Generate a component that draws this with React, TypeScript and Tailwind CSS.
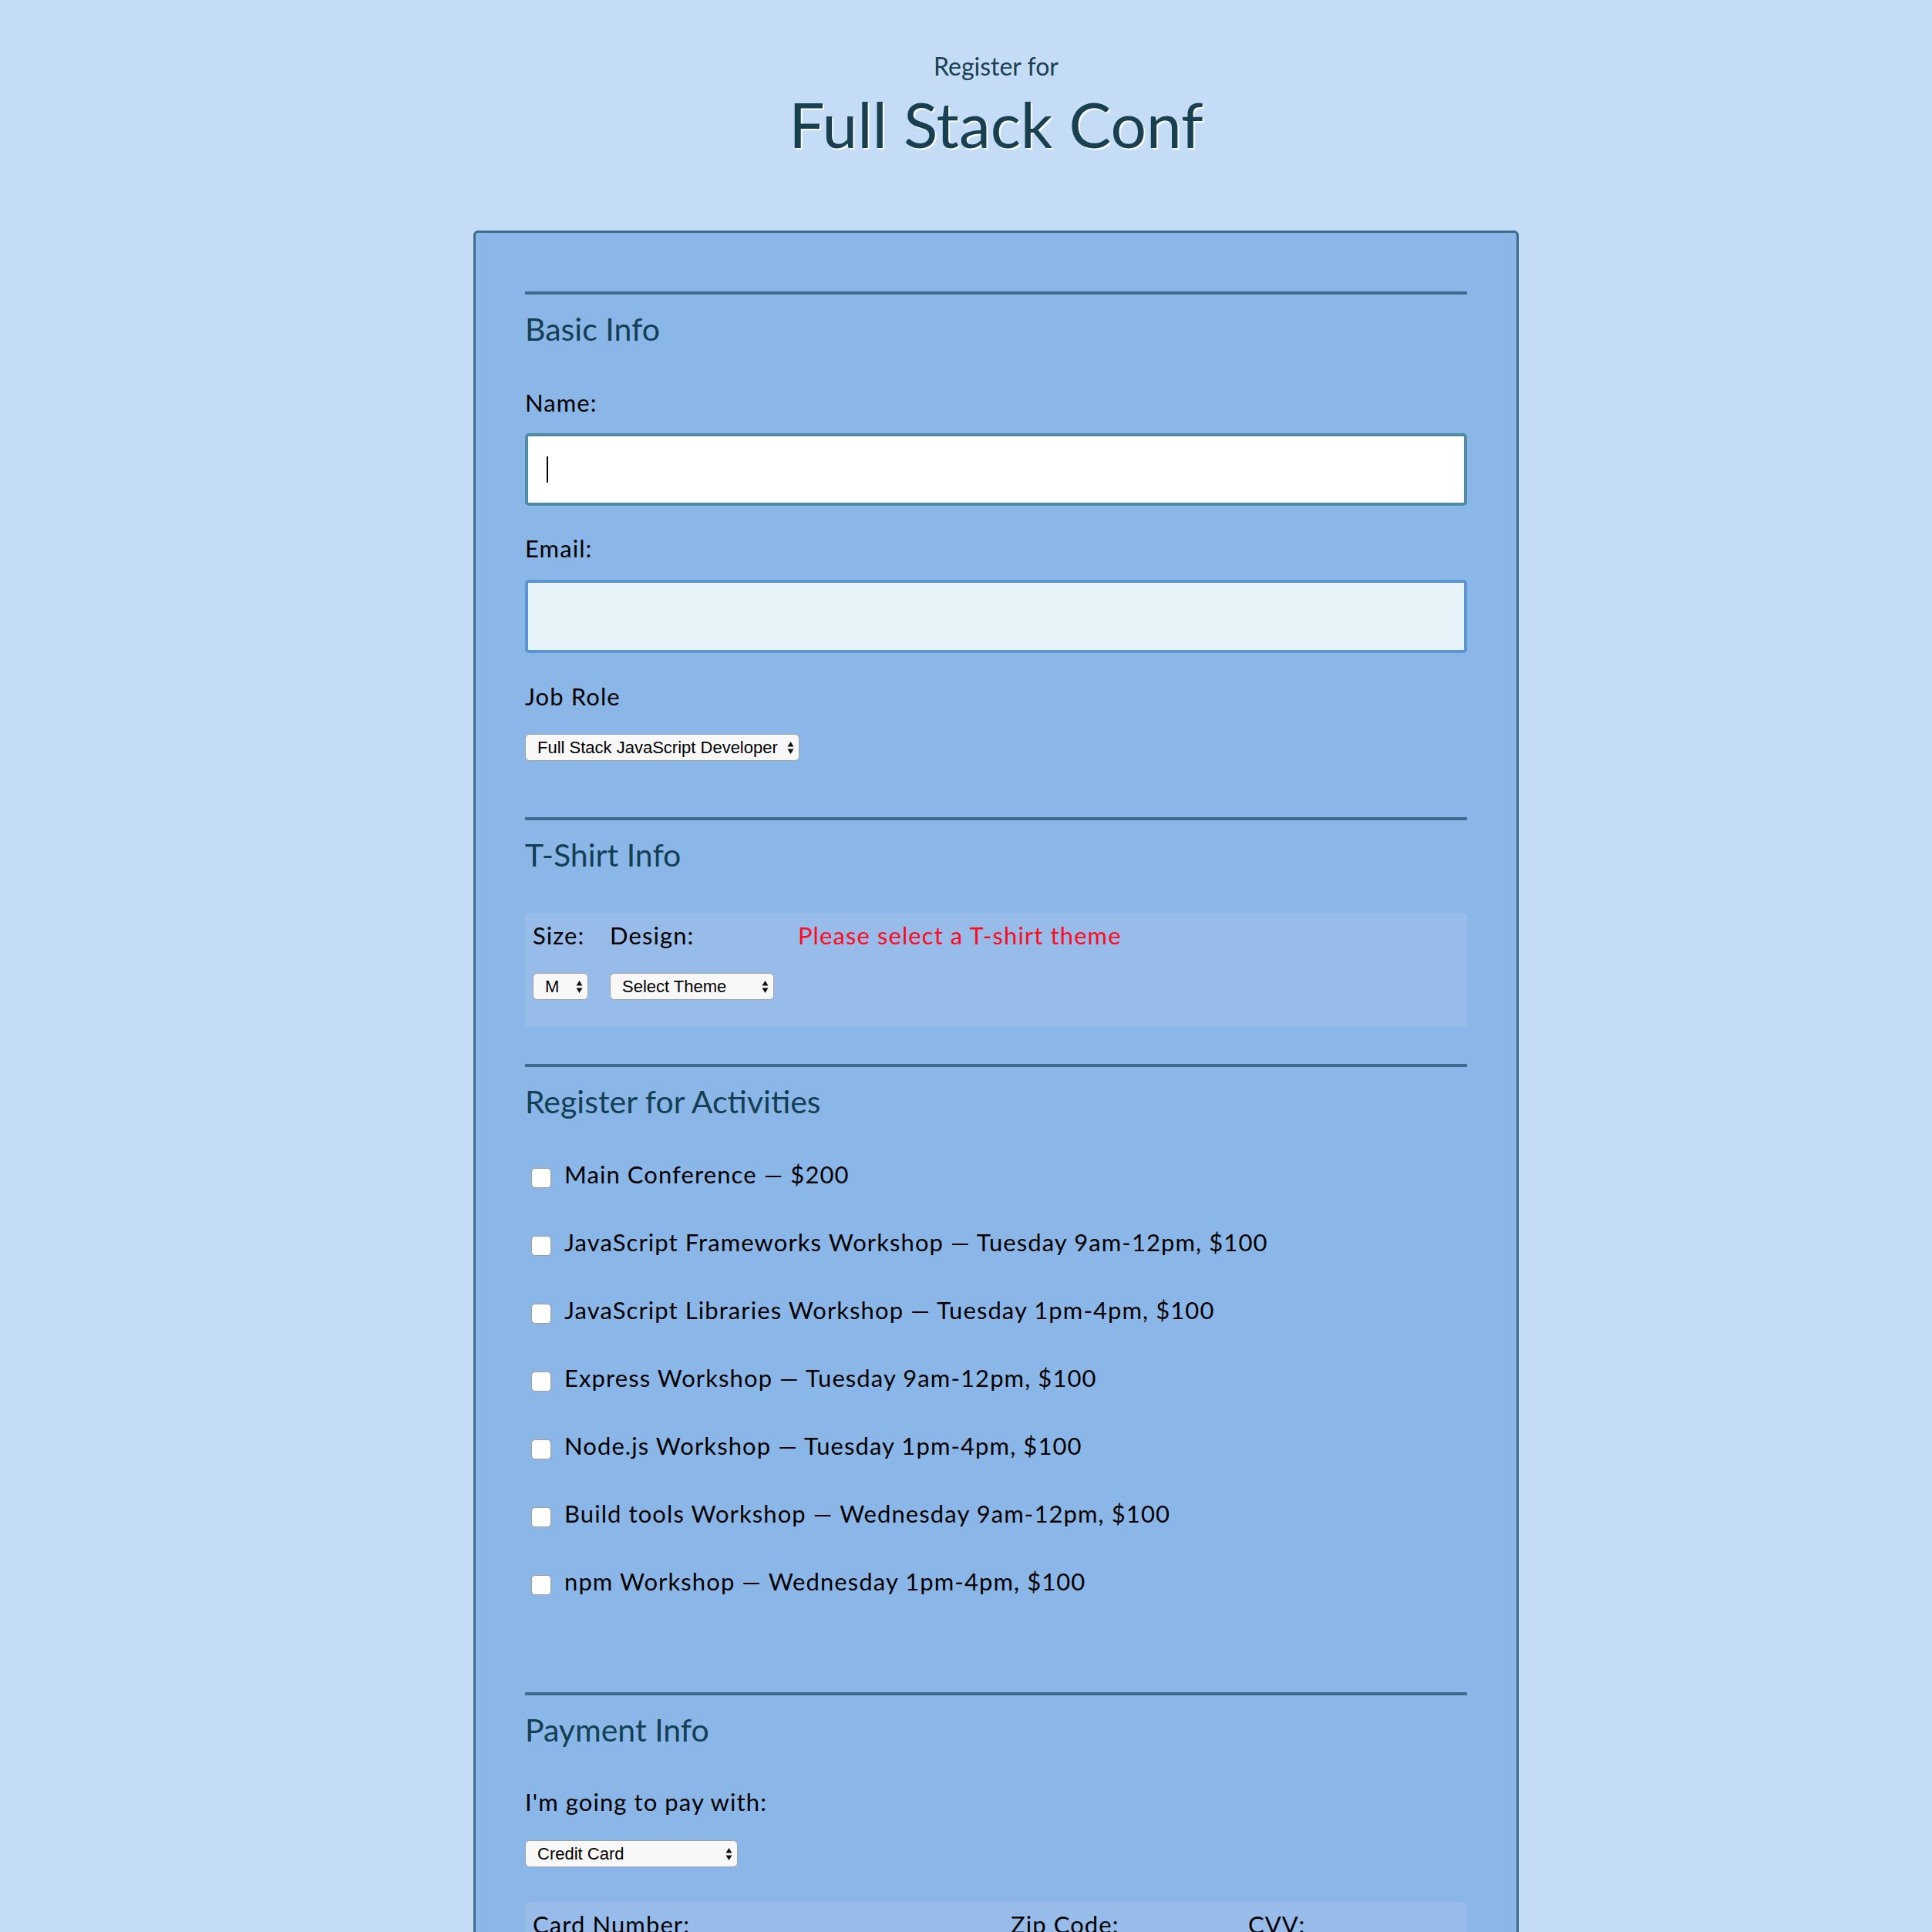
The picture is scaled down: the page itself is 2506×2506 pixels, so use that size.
import React from "react";

const activities = [
  "Main Conference — $200",
  "JavaScript Frameworks Workshop — Tuesday 9am-12pm, $100",
  "JavaScript Libraries Workshop — Tuesday 1pm-4pm, $100",
  "Express Workshop — Tuesday 9am-12pm, $100",
  "Node.js Workshop — Tuesday 1pm-4pm, $100",
  "Build tools Workshop — Wednesday 9am-12pm, $100",
  "npm Workshop — Wednesday 1pm-4pm, $100",
];

function Arrows() {
  return (
    <svg width="9" height="18" viewBox="0 0 9 18" className="shrink-0">
      <path d="M4.5 1 L8.5 7.5 H0.5 Z" fill="#111" />
      <path d="M4.5 17 L8.5 10.5 H0.5 Z" fill="#111" />
    </svg>
  );
}

function FakeSelect({ label, width }: { label: string; width: string }) {
  return (
    <div
      className={`${width} h-[35px] flex items-center justify-between pl-[15px] pr-[6px] bg-[#f8f8f8] border-[1.5px] border-[#a3a3a3] rounded-[6px] text-[22px] text-black leading-none tracking-normal`}
      style={{ fontFamily: '"Liberation Sans", Arial, sans-serif' }}
    >
      <span>{label}</span>
      <Arrows />
    </div>
  );
}

function Heading({ children }: { children: React.ReactNode }) {
  return <h2 className="text-[41px] leading-none tracking-normal text-[#133f55] mt-[24px]">{children}</h2>;
}

export default function App() {
  return (
    <div
      className="min-h-screen bg-[#c5dcf7] pt-[70px]"
      style={{ fontFamily: 'Lato, "Open Sans", sans-serif' }}
    >
      <div className="ml-[614px] w-[1356px]">
        <header className="text-center text-[#184050]">
          <p className="text-[32px] leading-none">Register for</p>
          <h1 className="mt-[17px] text-[82px] leading-none [text-shadow:2px_2px_1px_#ffffff]">Full Stack Conf</h1>
        </header>

        <form className="mt-[98px] bg-[#8bb7e8] border-[3px] border-[#3c6b8d] rounded-md px-16 pt-[76px] text-black text-[31px] tracking-[0.035em]">
          {/* basic info */}
          <section className="border-t-4 border-[#3b6b8e]">
            <Heading>Basic Info</Heading>
            <label className="block mt-[60px] leading-none">Name:</label>
            <div className="mt-[24px] h-[94px] bg-white border-4 border-[#4d8ba6] rounded-[5px] flex items-center pl-[24px]">
              <span className="w-[2px] h-[34px] bg-black" />
            </div>
            <label className="block mt-[40px] leading-none">Email:</label>
            <div className="mt-[25px] h-[95px] bg-[#e6f4fa] border-4 border-[#5b94d2] rounded-[5px]" />
            <label className="block mt-[41px] leading-none">Job Role</label>
            <div className="mt-[33px]">
              <FakeSelect label="Full Stack JavaScript Developer" width="w-[356px]" />
            </div>
          </section>

          {/* t-shirt */}
          <section className="mt-[73px] border-t-4 border-[#3b6b8e]">
            <Heading>T-Shirt Info</Heading>
            <div className="mt-[55px] h-[148px] bg-[#97bce9] rounded-[6px] px-[10px] pt-[14px] flex gap-[28px]">
              <div>
                <p className="leading-none">Size:</p>
                <div className="mt-[33px]">
                  <FakeSelect label="M" width="w-[72px]" />
                </div>
              </div>
              <div>
                <p className="leading-none">Design:</p>
                <div className="mt-[33px]">
                  <FakeSelect label="Select Theme" width="w-[213px]" />
                </div>
              </div>
              <p className="ml-[3px] leading-none text-[#ff0a1e]">Please select a T-shirt theme</p>
            </div>
          </section>

          {/* activities */}
          <section className="mt-[48px] border-t-4 border-[#3b6b8e]">
            <Heading>Register for Activities</Heading>
            <div className="mt-[59px] pl-[8px] flex flex-col gap-[57px]">
              {activities.map((a) => (
                <label key={a} className="flex items-center gap-[17px] leading-none h-[31px]">
                  <span className="w-[26px] h-[26px] translate-y-[4px] bg-white border border-[#9d9d9d] rounded-[5px] shrink-0" />
                  <span>{a}</span>
                </label>
              ))}
            </div>
          </section>

          {/* payment */}
          <section className="mt-[128px] border-t-4 border-[#3b6b8e]">
            <Heading>Payment Info</Heading>
            <label className="block mt-[58px] leading-none">I'm going to pay with:</label>
            <div className="mt-[34px]">
              <FakeSelect label="Credit Card" width="w-[276px]" />
            </div>
            <div className="mt-[45px] bg-[#97bce9] rounded-[6px] px-[10px] pt-[14px] pb-[120px] flex leading-none">
              <div className="w-[620px]">Card Number:</div>
              <div className="w-[308px]">Zip Code:</div>
              <div>CVV:</div>
            </div>
          </section>
          <div className="h-[120px]" />
        </form>
      </div>
    </div>
  );
}
